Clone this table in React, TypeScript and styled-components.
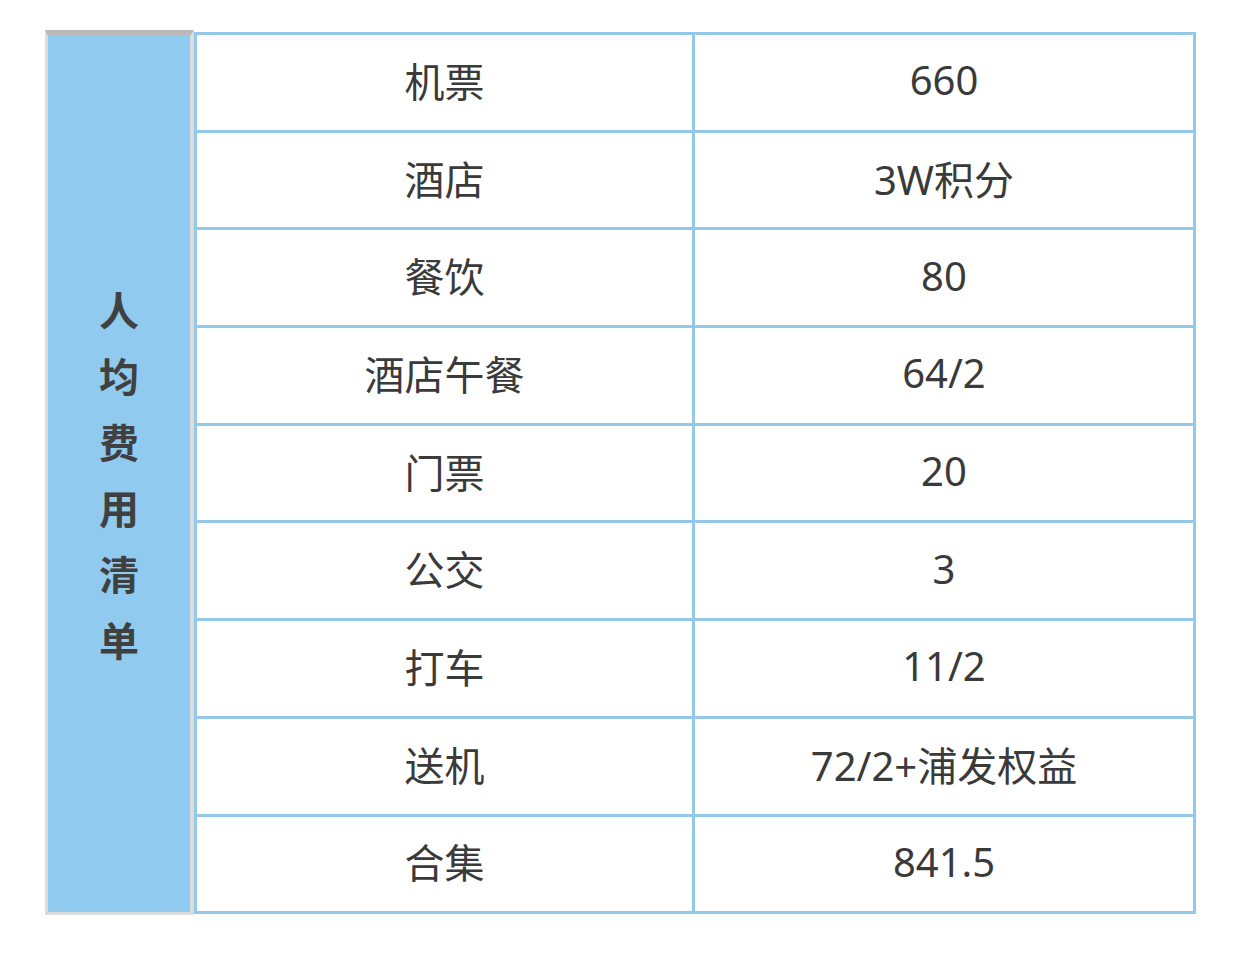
import styled, { createGlobalStyle } from "styled-components";

const GlobalStyle = createGlobalStyle`
    body {
        margin: 0;
        background: #ffffff;
        font-family: "Noto Sans", "Noto Sans CJK SC", sans-serif;
    }
`;

const Page = styled.div`
    display: flex;
    align-items: flex-start;
    padding: 30px 0 0 45px;
`;

const SideCell = styled.div`
    box-sizing: border-box;
    width: 149px;
    height: 885px;
    background: #90caee;
    border-top: 6px solid #bbb9b9;
    border-left: 3px solid #dcdcdc;
    border-right: 4px solid #dcdcdc;
    border-bottom: 3px solid #dcdcdc;
    display: flex;
    flex-direction: column;
    align-items: center;
    justify-content: center;
`;

const SideChar = styled.span`
    display: block;
    font-size: 40px;
    line-height: 66px;
    font-weight: 700;
    color: #404040;
    font-family: "Noto Sans CJK SC", sans-serif;
`;

const Table = styled.div`
    margin-top: 2px;
    display: grid;
    grid-template-columns: 495px 498px;
    grid-auto-rows: 94.7px;
    gap: 3px;
    padding: 3px;
    background: #93c8e8;
`;

const Cell = styled.div`
    box-sizing: border-box;
    background: #ffffff;
    display: flex;
    align-items: center;
    justify-content: center;
    padding-bottom: 5px;
    font-size: 40px;
    color: #3a3a3a;
    font-family: "Noto Sans", "Noto Sans CJK SC", sans-serif;
`;

const rows = [
    ["机票", "660"],
    ["酒店", "3W积分"],
    ["餐饮", "80"],
    ["酒店午餐", "64/2"],
    ["门票", "20"],
    ["公交", "3"],
    ["打车", "11/2"],
    ["送机", "72/2+浦发权益"],
    ["合集", "841.5"],
];

function App() {
    return <>
        <GlobalStyle />
        <Page>
            <SideCell>
                {"人均费用清单".split("").map((ch, i) => (
                    <SideChar key={i}>{ch}</SideChar>
                ))}
            </SideCell>
            <Table>
                {rows.map(([name, cost]) => [
                    <Cell key={name}>{name}</Cell>,
                    <Cell key={name + "-v"}>{cost}</Cell>,
                ])}
            </Table>
        </Page>
    </>;
}

export default App;
